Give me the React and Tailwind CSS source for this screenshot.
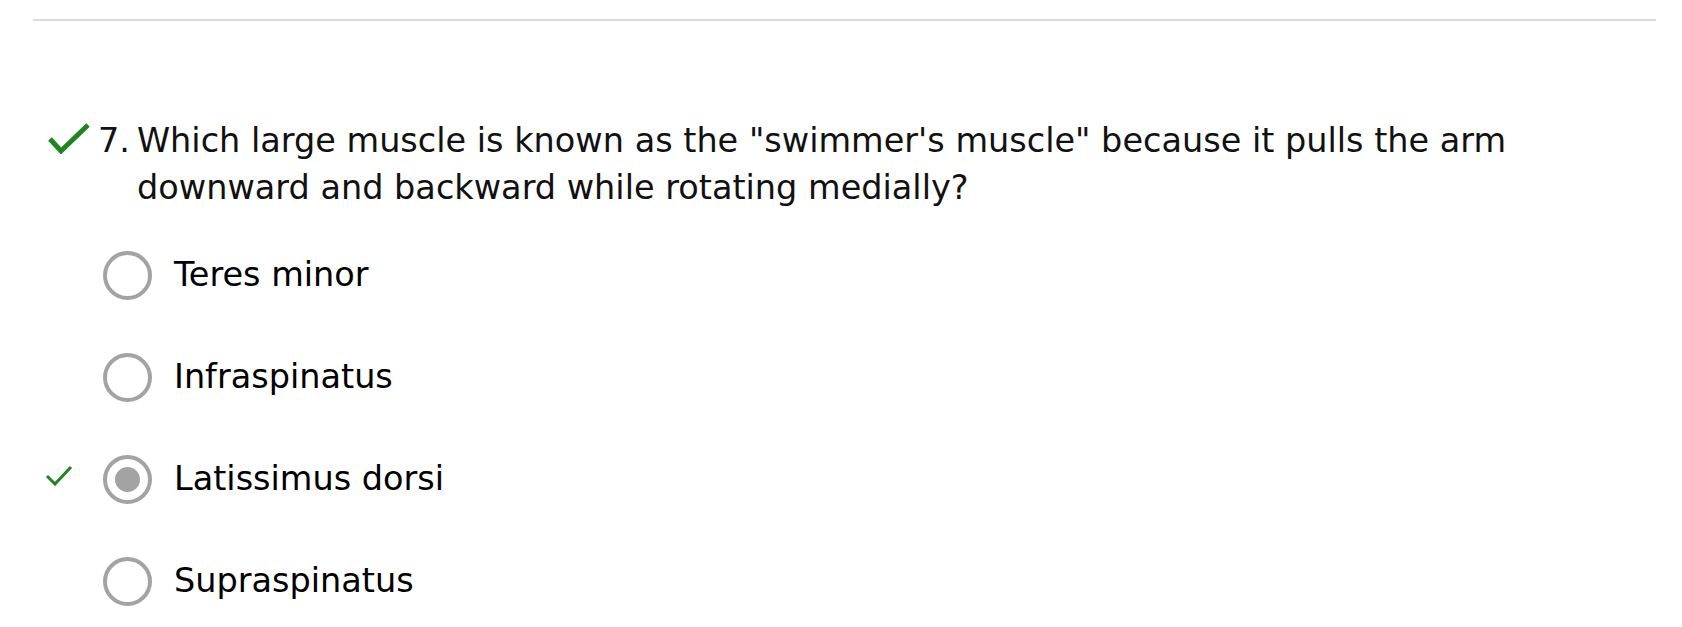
import React from "react";

function BigCheck() {
  return (
    <svg width="44" height="32" viewBox="0 0 44 32" className="shrink-0">
      <path d="M3 17 L14 29 L41 3" fill="none" stroke="#1f861f" strokeWidth="5" strokeLinecap="butt" strokeLinejoin="miter" />
    </svg>
  );
}

function SmallCheck() {
  return (
    <svg width="28" height="21" viewBox="0 0 28 21">
      <path d="M2 11 L10 19 L26 2" fill="none" stroke="#1f861f" strokeWidth="3" />
    </svg>
  );
}

function Option({ label, selected, correct }) {
  return (
    <div className="flex items-center h-[102px]">
      <div className="w-[70px] shrink-0 flex justify-start pl-[12px] -mt-[8px]">
        {correct ? <SmallCheck /> : null}
      </div>
      <div className="w-[49px] h-[49px] rounded-full border-[4px] border-[#a3a3a3] flex items-center justify-center shrink-0">
        {selected ? <div className="w-[25px] h-[25px] rounded-full bg-[#a3a3a3]" /> : null}
      </div>
      <div className="ml-[22px] text-[33.5px] text-black leading-none">{label}</div>
    </div>
  );
}

export default function App() {
  return (
    <div className="bg-white w-[1682px] h-[627px] overflow-hidden" style={{ fontFamily: '"DejaVu Sans", Verdana, sans-serif' }}>
      <div className="pt-[19px] pl-[33px] pr-[26px]">
        <div className="h-[2px] bg-[#dcdcdc]" />
      </div>
      <div className="pl-[33px] pt-[96px]">
        <div className="flex items-start text-[33.5px] leading-[47px] text-[#111]">
          <div className="w-[65px] shrink-0 flex pl-[14px] pt-[5px]">
            <BigCheck />
          </div>
          <div className="w-[39px] shrink-0">7.</div>
          <div className="w-[1440px]">
            Which large muscle is known as the "swimmer's muscle" because it pulls the arm downward and backward while rotating medially?
          </div>
        </div>
        <div className="mt-[13px]">
          <Option label="Teres minor" />
          <Option label="Infraspinatus" />
          <Option label="Latissimus dorsi" selected correct />
          <Option label="Supraspinatus" />
        </div>
      </div>
    </div>
  );
}
